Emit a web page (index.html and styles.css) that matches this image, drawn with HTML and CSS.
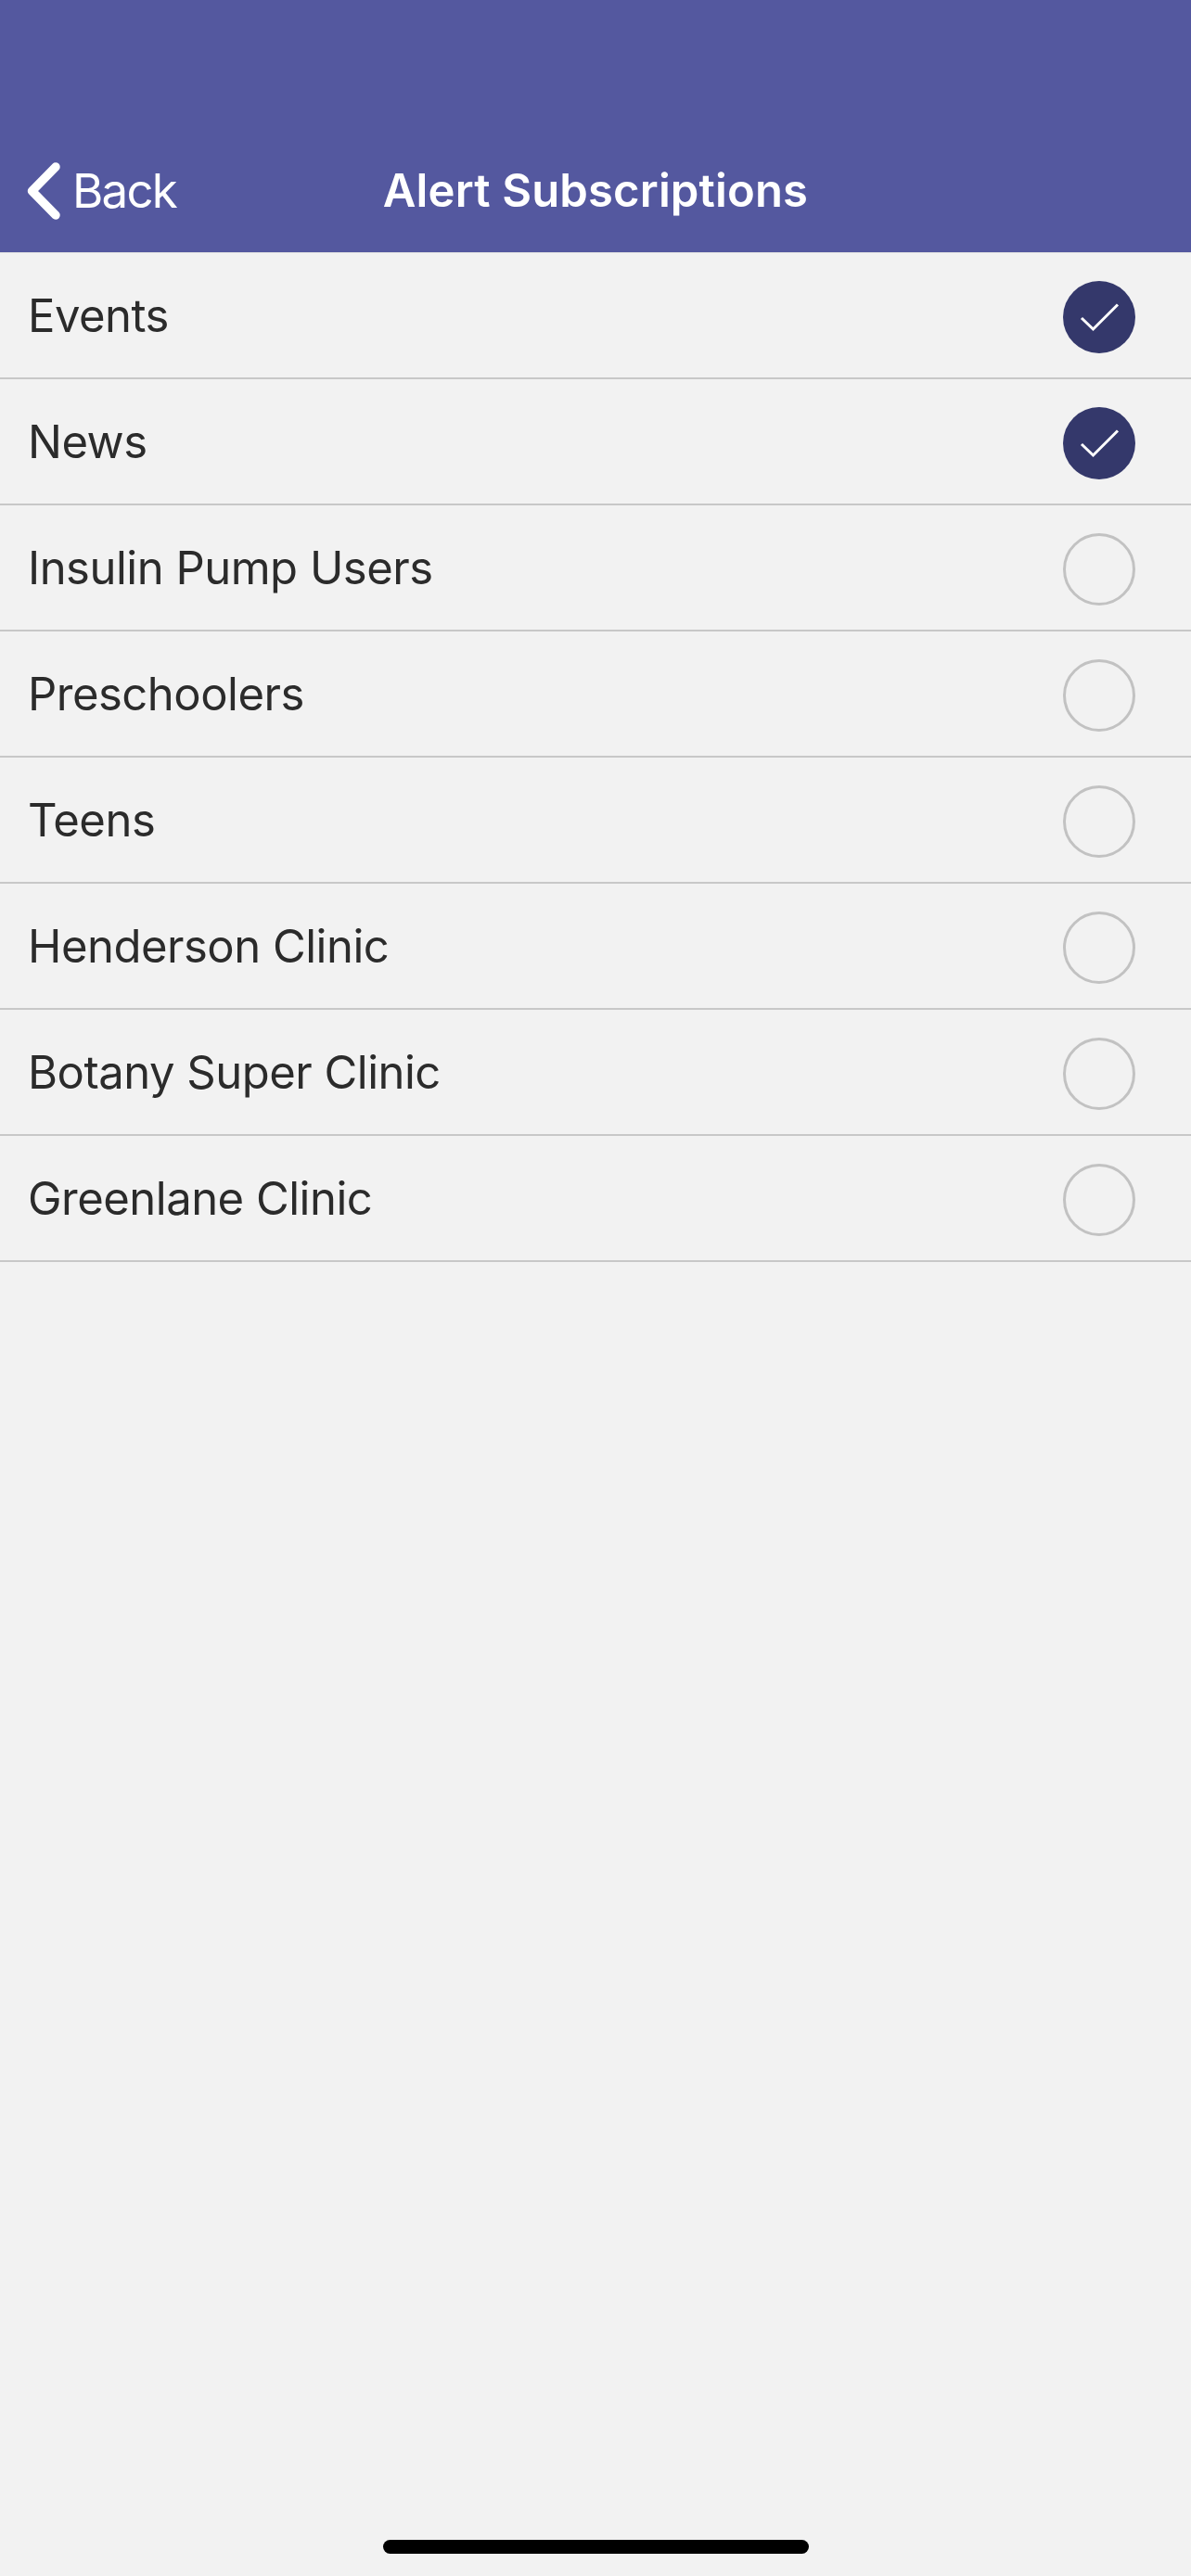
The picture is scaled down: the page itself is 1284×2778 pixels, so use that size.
FILE: index.html
```html
<!DOCTYPE html>
<html lang="en">
<head>
<meta charset="utf-8">
<title>Alert Subscriptions</title>
<link rel="stylesheet" href="styles.css">
</head>
<body>
<div class="app">
  <header class="nav">
    <div class="nav-bar">
      <div class="back">
        <svg class="chev" viewBox="0 0 38 64"><path d="M32 6 L6.5 32 L32 58" fill="none" stroke="#fff" stroke-width="9.5" stroke-linecap="round" stroke-linejoin="round"/></svg>
        <span>Back</span>
      </div>
      <h1 class="title">Alert Subscriptions</h1>
    </div>
  </header>
  <ul class="list">
    <li class="row"><span>Events</span><span class="radio on"><svg viewBox="0 0 78 78"><path d="M20 40 L32.5 52 L59 25.5" fill="none" stroke="#fff" stroke-width="3"/></svg></span></li>
    <li class="row"><span>News</span><span class="radio on"><svg viewBox="0 0 78 78"><path d="M20 40 L32.5 52 L59 25.5" fill="none" stroke="#fff" stroke-width="3"/></svg></span></li>
    <li class="row"><span>Insulin Pump Users</span><span class="radio"></span></li>
    <li class="row"><span>Preschoolers</span><span class="radio"></span></li>
    <li class="row"><span>Teens</span><span class="radio"></span></li>
    <li class="row"><span>Henderson Clinic</span><span class="radio"></span></li>
    <li class="row"><span>Botany Super Clinic</span><span class="radio"></span></li>
    <li class="row"><span>Greenlane Clinic</span><span class="radio"></span></li>
  </ul>
  <div class="home"></div>
</div>
</body>
</html>
```
FILE: styles.css
```css
* { box-sizing: border-box; }
html, body { margin: 0; padding: 0; }
body { background: #f2f2f2; font-family: Inter, "Liberation Sans", sans-serif; }
.app { width: 1284px; height: 2778px; display: flex; flex-direction: column; background: #f2f2f2; position: relative; overflow: hidden; }
.nav { height: 273px; background: #54589f; border-bottom: 1px solid #e2e2e2; padding-bottom: 20px; display: flex; align-items: flex-end; flex: none; }
.nav-bar { width: 100%; height: 94px; position: relative; display: flex; align-items: center; justify-content: center; }
.back { position: absolute; left: 28px; top: 0; height: 100%; display: flex; align-items: center; gap: 12px; color: #fff; font-size: 51px; letter-spacing: -1.8px; }
.chev { width: 38px; height: 64px; margin-top: 2px; }
.title { margin: 0; color: #fff; font-size: 49px; font-weight: 600; letter-spacing: 0.15px; }
.list { list-style: none; margin: 0; padding: 0; }
.row { height: 136px; border-bottom: 2px solid #c8c8c8; display: flex; align-items: center; justify-content: space-between; padding: 1px 60px 0 30px; font-size: 49px; letter-spacing: -0.5px; color: #2b2b2b; }
.radio { width: 78px; height: 78px; margin-top: 2px; border-radius: 50%; border: 3px solid #c2c2c2; flex: none; }
.radio.on { background: #34386b; border: none; }
.radio svg { display: block; width: 100%; height: 100%; }
.home { position: absolute; left: 413px; bottom: 24px; width: 459px; height: 15px; border-radius: 8px; background: #000; }
```
